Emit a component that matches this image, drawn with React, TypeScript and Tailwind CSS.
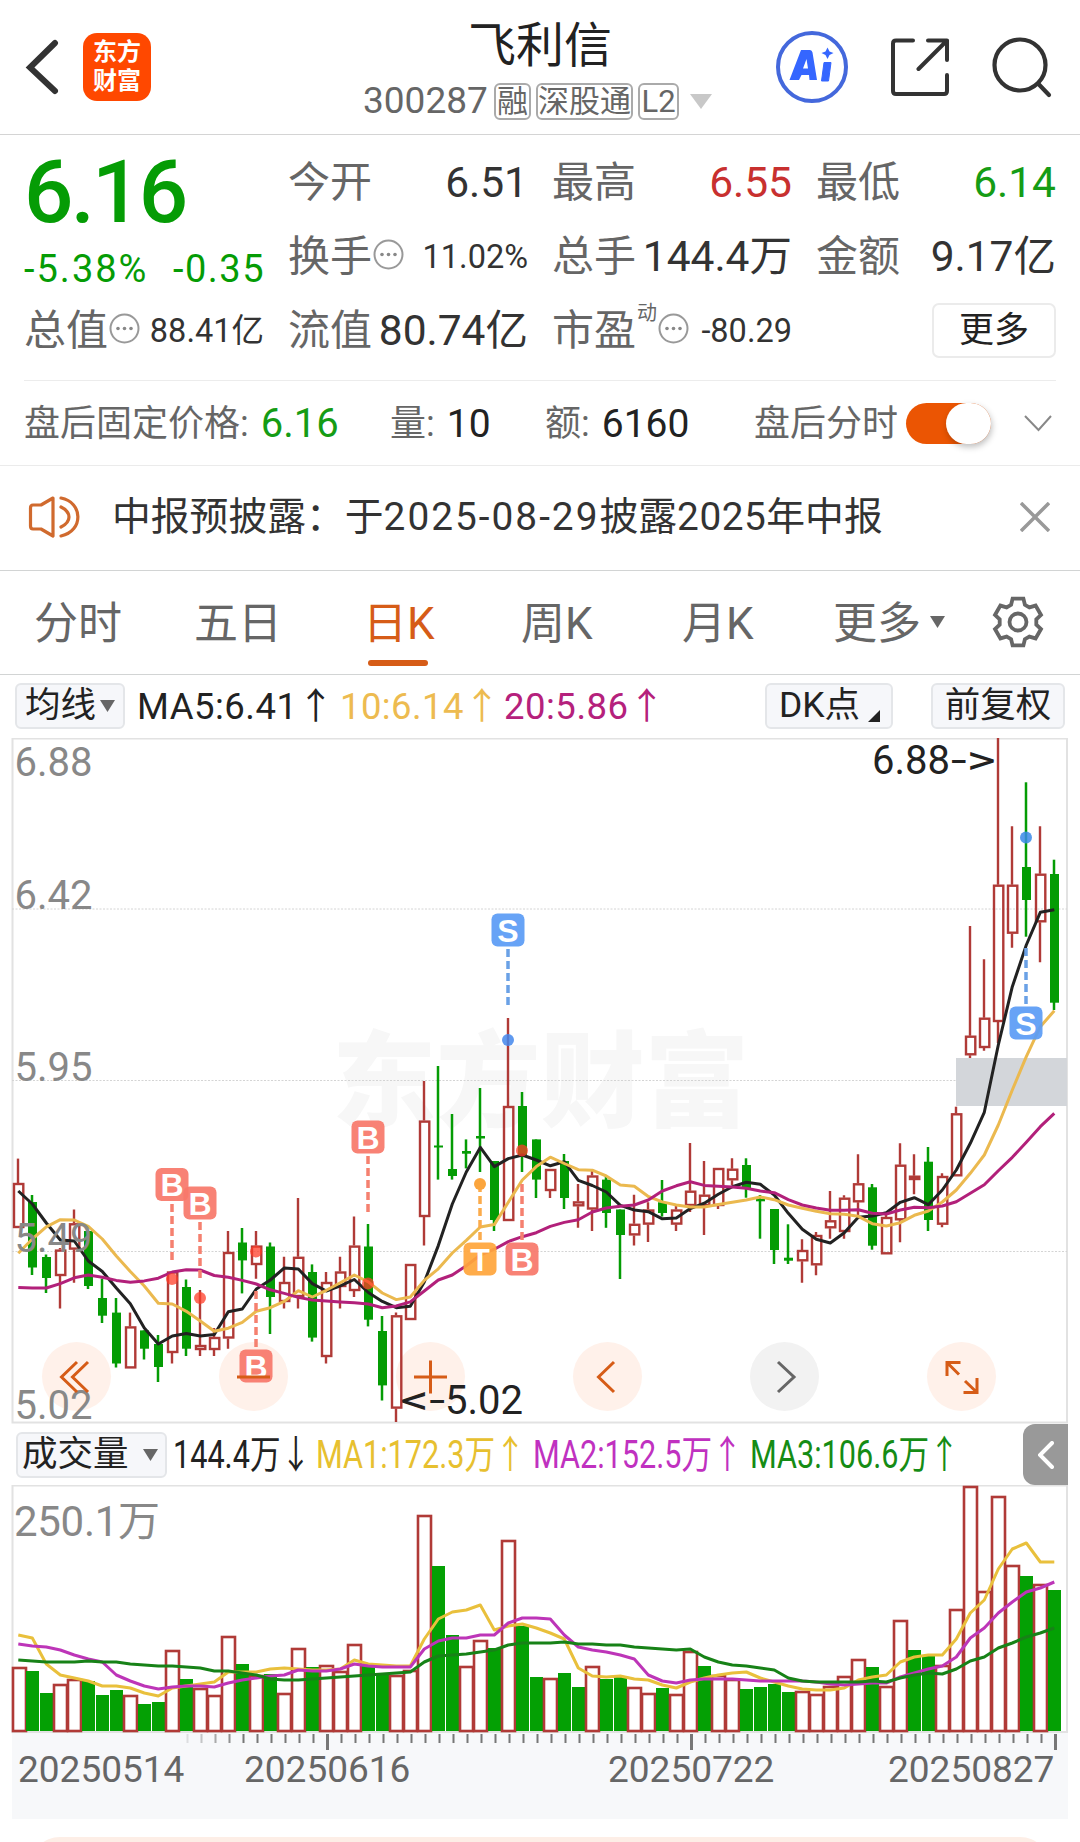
import type { ReactNode } from "react";

type Dir = "up" | "down";
type Candle = [dir: Dir, high: number, top: number, bottom: number, low: number];

const STEP = 14;
const FIRST_X = 18;
const xAt = (i: number) => FIRST_X + i * STEP;

const candles: Candle[] = [
  ["up", 1158.6, 1183, 1228, 1228],
  ["down", 1195, 1202, 1267.5, 1275],
  ["down", 1254.5, 1257, 1278, 1293],
  ["up", 1248, 1249.6, 1276, 1308.6],
  ["up", 1209.5, 1223.3, 1249.6, 1282.7],
  ["down", 1231, 1231, 1286, 1289],
  ["down", 1278.7, 1298, 1315.7, 1323],
  ["down", 1298, 1312.6, 1363.5, 1367.5],
  ["up", 1312.6, 1326.4, 1368.4, 1368.4],
  ["down", 1330.4, 1330.4, 1348.7, 1359.5],
  ["down", 1335, 1344, 1367, 1382],
  ["up", 1271.5, 1271.5, 1353, 1363.5],
  ["down", 1279.5, 1287, 1348.7, 1356],
  ["up", 1290, 1345, 1350, 1356],
  ["up", 1328, 1337, 1350, 1356],
  ["up", 1231, 1252, 1338.5, 1348.7],
  ["down", 1228, 1242.5, 1260.4, 1293.4],
  ["up", 1231, 1245.6, 1265, 1278.7],
  ["down", 1242.5, 1246.5, 1297, 1334],
  ["up", 1256.8, 1282, 1302, 1308.6],
  ["up", 1198, 1256.8, 1297, 1308.6],
  ["down", 1264.4, 1272, 1337.6, 1341.6],
  ["up", 1272, 1282, 1357, 1363.5],
  ["up", 1256.8, 1271.5, 1287, 1308.6],
  ["up", 1216.6, 1245.6, 1291, 1297],
  ["down", 1224, 1246.5, 1319.7, 1326.4],
  ["down", 1316, 1331, 1385.4, 1400.5],
  ["up", 1312.6, 1315.3, 1408.6, 1422],
  ["up", 1264, 1264, 1320, 1320],
  ["up", 1081, 1120.6, 1217, 1245.6],
  ["down", 1066, 1145.5, 1147.5, 1179.6],
  ["down", 1114, 1169, 1176, 1179.6],
  ["down", 1139.4, 1151, 1153.7, 1168.4],
  ["down", 1088, 1136, 1138.5, 1172],
  ["down", 1161, 1161, 1220, 1231],
  ["up", 1018, 1106, 1221, 1221],
  ["down", 1092, 1106, 1156, 1172],
  ["down", 1139.4, 1139.4, 1179.6, 1198],
  ["up", 1169, 1169, 1191, 1198],
  ["down", 1154, 1161, 1198, 1209],
  ["up", 1184, 1201.4, 1206.3, 1227.8],
  ["up", 1169, 1175.5, 1209.5, 1231],
  ["down", 1176, 1179.6, 1213, 1227.8],
  ["down", 1209.5, 1209.5, 1235, 1279],
  ["up", 1194.7, 1223.8, 1235.4, 1245.6],
  ["up", 1202.3, 1209.5, 1224.6, 1242],
  ["down", 1180, 1202.3, 1213, 1216.6],
  ["up", 1206, 1209.5, 1224.6, 1231],
  ["up", 1143, 1190.7, 1206, 1212],
  ["up", 1161, 1194.7, 1206, 1235],
  ["up", 1168, 1168, 1206, 1209],
  ["up", 1158.3, 1168.7, 1180.3, 1185],
  ["down", 1158.3, 1165, 1188.3, 1197.7],
  ["down", 1195, 1199, 1201.3, 1238.7],
  ["down", 1209, 1209, 1250, 1264],
  ["down", 1224.3, 1257.7, 1260.7, 1264],
  ["up", 1239.3, 1250, 1261.3, 1282.7],
  ["up", 1232, 1235, 1265.3, 1275.3],
  ["up", 1191, 1220.3, 1228.3, 1238.7],
  ["up", 1195.3, 1197.7, 1232, 1238.7],
  ["up", 1154.3, 1183.3, 1202.3, 1216],
  ["down", 1184, 1187.3, 1245.7, 1249.7],
  ["up", 1213, 1217, 1254.3, 1254.3],
  ["up", 1143.3, 1164.7, 1220.3, 1242.3],
  ["up", 1154.3, 1175.7, 1180, 1194.3],
  ["down", 1147, 1161.7, 1220, 1231],
  ["up", 1173.3, 1176, 1224.7, 1227.3],
  ["up", 1106.7, 1113.3, 1176.3, 1176.3],
  ["up", 926, 1035.7, 1055.3, 1058],
  ["up", 959.3, 1017.7, 1048, 1050.7],
  ["up", 738, 884.7, 1022, 1043],
  ["up", 826.3, 884.7, 933.7, 947.7],
  ["down", 782.3, 867, 900, 936.7],
  ["up", 826.3, 873.7, 922.3, 962.3],
  ["down", 859.7, 874, 1002.7, 1010],
];

const ma5 = [
  1191, 1204, 1223, 1240, 1241, 1261, 1271.5, 1288, 1303.7, 1328, 1344, 1336, 1333.6, 1336, 1334.5,
  1311.7, 1309, 1289, 1280, 1268, 1269, 1283.6, 1291, 1285.8, 1279.5, 1292.5, 1301.4, 1307.7, 1306.3,
  1282, 1245.6, 1204, 1172, 1147.4, 1166.6, 1158.6, 1155, 1160, 1165.8, 1161.7, 1180.4, 1185.5, 1192,
  1205.4, 1210, 1211.7, 1218.8, 1218, 1208.6, 1203.2, 1194.3, 1186.7, 1182.3, 1184.3, 1195, 1213.3,
  1229.3, 1239.3, 1243, 1232.7, 1217.3, 1216, 1212.7, 1202.3, 1197.7, 1204.7, 1190, 1170, 1143.3,
  1112.3, 1045, 986.7, 945, 912.3, 909.7,
];

const ma10 = [
  1253.2, 1239, 1226.9, 1219.7, 1220, 1226.4, 1239, 1256, 1271.5, 1286, 1303.2, 1304, 1311.3, 1321,
  1331.3, 1328.2, 1322.4, 1311.3, 1307.7, 1301.4, 1290.7, 1297, 1290.3, 1282.7, 1275, 1281.8, 1293,
  1299.6, 1297, 1280.4, 1268.8, 1253, 1240.3, 1227, 1224.6, 1202.3, 1180, 1166.6, 1157.2, 1163.5,
  1169.7, 1170.2, 1176, 1185, 1186.3, 1196.5, 1201.9, 1205, 1207, 1207, 1204.6, 1202.3, 1200, 1197,
  1199.7, 1205, 1208.3, 1211.3, 1213.7, 1214.3, 1216.3, 1223.7, 1226, 1222.7, 1215.3, 1211, 1202,
  1190, 1173.3, 1155, 1125, 1090, 1056.7, 1026.7, 1010.7,
];

const ma20 = [
  1287.6, 1288, 1288, 1283.6, 1277.8, 1275, 1277.3, 1280.4, 1282.2, 1280.9, 1278.2, 1272, 1269.7,
  1270, 1275.5, 1277.3, 1280.4, 1284, 1289.8, 1293.4, 1297.4, 1300, 1301, 1301.9, 1302.8, 1304,
  1307.7, 1305.9, 1301.9, 1291, 1280, 1275, 1265.7, 1255, 1249.2, 1241.6, 1236.7, 1232.7, 1226.4,
  1222.4, 1219.7, 1212, 1208, 1206.3, 1205, 1200, 1191, 1185.8, 1181.8, 1185.4, 1186.3, 1187, 1188.3,
  1191, 1192.7, 1199.7, 1205, 1208, 1210.3, 1210.3, 1209.7, 1213.3, 1214, 1210, 1207.3, 1207.7,
  1206, 1201.7, 1193.3, 1184.7, 1170.7, 1157.3, 1142.3, 1126.7, 1113.3,
];

// Volume bars, heights in chart pixels
const volumes: [Dir, number][] = [
  ["up", 65], ["down", 61], ["down", 39], ["up", 48], ["up", 53], ["down", 51], ["down", 37],
  ["down", 42], ["up", 37], ["down", 28], ["down", 30], ["up", 82], ["down", 53], ["up", 44],
  ["up", 37], ["up", 96], ["down", 68], ["up", 57], ["down", 58], ["up", 39], ["up", 84],
  ["down", 65], ["up", 67], ["up", 61], ["up", 88], ["down", 66], ["down", 59], ["up", 57],
  ["up", 62], ["up", 217], ["down", 166], ["down", 97], ["up", 66], ["up", 92], ["down", 84],
  ["up", 192], ["down", 106], ["down", 55], ["up", 54], ["down", 59], ["down", 45], ["up", 66],
  ["down", 53], ["down", 55], ["up", 45], ["up", 39], ["down", 44], ["up", 38], ["up", 81],
  ["down", 66], ["up", 57], ["up", 53], ["down", 43], ["down", 45], ["down", 48], ["down", 40],
  ["up", 41], ["up", 38], ["up", 46], ["up", 56], ["up", 73], ["down", 65], ["up", 46],
  ["up", 112], ["down", 82], ["down", 76], ["up", 67], ["up", 123], ["up", 246], ["up", 141],
  ["up", 236], ["up", 167], ["down", 156], ["up", 148], ["down", 142],
];

const vol5 = [
  97, 94, 68, 57, 54, 51, 46, 46, 44, 39, 36, 44, 46, 48, 50, 60, 60, 60, 63, 64, 63, 62, 62, 63, 72,
  68, 67, 66, 66, 93, 113, 120, 122, 127, 102, 106, 108, 104, 99, 93, 64, 56, 55, 56, 53, 52, 47, 44,
  50, 54, 57, 59, 60, 54, 50, 46, 43, 42, 42, 44, 52, 55, 57, 70, 75, 77, 77, 93, 119, 132, 163, 183,
  189, 170, 170,
];

const vol10 = [
  88, 86, 85, 82, 77, 73, 70, 57, 51, 46, 43, 45, 46, 46, 45, 49, 52, 54, 56, 57, 62, 61, 61, 63, 68,
  66, 65, 65, 65, 83, 91, 94, 94, 97, 97, 109, 114, 114, 113, 97, 85, 82, 80, 77, 73, 57, 51, 49, 52,
  53, 53, 53, 52, 51, 51, 51, 51, 50, 48, 47, 48, 49, 49, 55, 59, 63, 66, 75, 94, 104, 119, 130, 140,
  144, 150,
];

const vol20 = [
  72, 71, 70, 70, 70, 71, 70, 70, 68, 67, 66, 66, 65, 64, 61, 61, 59, 57, 53, 52, 52, 53, 54, 55, 56,
  57, 58, 59, 60, 70, 76, 77, 78, 80, 82, 87, 89, 89, 89, 90, 88, 88, 87, 87, 85, 84, 83, 82, 83, 75,
  70, 67, 66, 64, 62, 54, 51, 50, 50, 50, 50, 51, 50, 54, 57, 59, 58, 63, 71, 75, 84, 89, 95, 99, 104,
];

const RED = "#b03a37";
const GREEN = "#049c04";

const toPoints = (ys: number[]) => ys.map((y, i) => `${xAt(i) + 0.3},${y}`).join(" ");

function MoreDots() {
  return (
    <svg className="w-[31px] h-[31px] shrink-0 -mt-1.5 ml-px" viewBox="0 0 31 31">
      <circle cx="15.5" cy="15.5" r="14" fill="none" stroke="#999" strokeWidth="2" />
      <circle cx="9" cy="15.5" r="1.8" fill="#888" />
      <circle cx="15.5" cy="15.5" r="1.8" fill="#888" />
      <circle cx="22" cy="15.5" r="1.8" fill="#888" />
    </svg>
  );
}

function Header() {
  return (
    <header className="relative h-[135px] border-b border-[#d4d4d4] flex justify-between">
      <div className="flex items-center pl-[25px] gap-6">
        <svg className="w-[34px] h-[58px]" viewBox="0 0 34 58" fill="none">
          <path d="M30 5 L5 29.5 L30 53" stroke="#333" strokeWidth="6" strokeLinecap="round" />
        </svg>
        <div className="w-[68px] h-[68px] rounded-[14px] bg-[#ff4800] text-white font-bold text-[24px] leading-[29px] flex flex-col items-center justify-center">
          <span>东方</span>
          <span>财富</span>
        </div>
      </div>

      <div className="absolute left-[363px] top-0 w-[352px] flex flex-col">
        <h1 className="text-[48px] leading-[60px] pt-4 pl-[105px] text-[#222]">飞利信</h1>
        <div className="flex items-center h-[38px] mt-[6px] text-[#666]">
          <span className="text-[37px] w-[131px]">300287</span>
          <div className="flex gap-[5px] text-[31px] leading-[33px]">
            <span className="border-2 border-[#aaa] rounded-[6px] w-[37px] h-[37px] flex items-center justify-center">融</span>
            <span className="border-2 border-[#aaa] rounded-[6px] w-[97px] h-[37px] flex items-center justify-center">深股通</span>
            <span className="border-2 border-[#aaa] rounded-[6px] w-[41px] h-[37px] flex items-center justify-center">L2</span>
          </div>
          <svg className="w-[22px] h-[15px] ml-[11px]" viewBox="0 0 22 15">
            <path d="M0 0 H22 L11 15 Z" fill="#c8c8c8" />
          </svg>
        </div>
      </div>

      <div className="flex items-center gap-[43px] pr-[28px]">
        <svg className="w-[72px] h-[72px]" viewBox="0 0 72 72">
          <circle cx="36" cy="36" r="34" fill="none" stroke="#4468dc" strokeWidth="4" />
          <path d="M25 19 H34 Q36 19 36.5 21.5 L41 49 H33.5 L33 44 H25.5 L23 49 H13.5 Z M30.5 28 L27 37.5 H32 Z" fill="#3566ff" fillRule="evenodd" />
          <path d="M48 31.5 H55 L52.5 50 H45.5 Z" fill="#3566ff" stroke="#3566ff" strokeLinejoin="round" />
          <path d="M51.5 16.5 L53.5 20.5 L57.5 22 L53.5 24 L51.5 28 L49.5 24 L45.5 22 L49.5 20.5 Z" fill="#3566ff" />
        </svg>
        <svg className="w-[58px] h-[58px]" viewBox="0 0 58 58" fill="none" stroke="#333" strokeWidth="4" strokeLinecap="round" strokeLinejoin="round">
          <path d="M22 2.5 H5 Q2 2.5 2 5.5 V53 Q2 56 5 56 H53 Q56 56 56 53 V37" />
          <path d="M37 2.5 H56 V22 M56 2.5 L27.5 31" />
        </svg>
        <svg className="w-[61px] h-[61px] -ml-px" viewBox="0 0 61 61" fill="none" stroke="#333" strokeWidth="4.2" strokeLinecap="round">
          <circle cx="29" cy="28" r="25.5" />
          <path d="M47.5 47 L58 58" />
        </svg>
      </div>
    </header>
  );
}

function Quote({ label, value, color = "text-[#333]" }: { label: string; value: string; color?: string }) {
  return (
    <div className="flex items-center justify-between">
      <span className="text-[#666]">{label}</span>
      <span className={`text-[42.5px] ${color}`}>{value}</span>
    </div>
  );
}

function SmallQuote({ label, value, sup }: { label: string; value: string; sup?: string }) {
  return (
    <div className="flex items-center">
      <span className="text-[#666]">{label}</span>
      {sup && <span className="text-[20px] text-[#666] self-start w-[21px] pl-px -mt-[18px]">{sup}</span>}
      <MoreDots />
      <span className="text-[#333] text-[32.5px] ml-auto">{value}</span>
    </div>
  );
}

function QuotePanel() {
  return (
    <section className="h-[246px] mx-6 border-b border-[#ececec] pt-[11px]">
      <div className="grid grid-cols-4 gap-x-6 auto-rows-[74px] text-[42px] leading-[74px] whitespace-nowrap">
        <div className="row-span-2 flex flex-col text-[#059c05]">
          <span className="text-[87px] leading-[93px] font-medium tracking-[-2.8px] h-[95px]">6.16</span>
          <span className="flex justify-between text-[38px] leading-[61px]">
            <span className="tracking-[2px]">-5.38%</span>
            <span className="tracking-[1.5px] -mr-[1px]">-0.35</span>
          </span>
        </div>
        <Quote label="今开" value="6.51" />
        <Quote label="最高" value="6.55" color="text-[#c8302f]" />
        <Quote label="最低" value="6.14" color="text-[#159c15]" />
        <SmallQuote label="换手" value="11.02%" />
        <Quote label="总手" value="144.4万" />
        <Quote label="金额" value="9.17亿" />
        <SmallQuote label="总值" value="88.41亿" />
        <Quote label="流值" value="80.74亿" />
        <SmallQuote label="市盈" value="-80.29" sup="动" />
        <div className="flex items-center justify-end">
          <button className="w-[124px] h-[55px] -mt-0.5 border-2 border-[#ebebeb] rounded-[7px] text-[35px] leading-none text-[#222]">更多</button>
        </div>
      </div>
    </section>
  );
}

function AfterHours() {
  return (
    <section className="h-[85px] border-b border-[#ebebeb] flex items-center pt-0.5 pl-6 text-[36px] text-[#666] whitespace-nowrap">
      <div className="w-[366px] flex items-center">
        盘后固定价格:<span className="text-[40px] text-[#159c15] ml-3">6.16</span>
      </div>
      <div className="w-[155px] flex items-center">
        量:<span className="text-[39px] text-[#222] ml-3">10</span>
      </div>
      <div className="w-[209px] flex items-center">
        额:<span className="text-[39px] text-[#222] ml-3">6160</span>
      </div>
      <span>盘后分时</span>
      <span className="ml-2 -mt-0.5 w-[85px] h-[41px] rounded-full bg-[#eb5503] flex items-center justify-end">
        <span className="w-[45px] h-[41px] rounded-full bg-white shadow-[1px_3px_6px_rgba(0,0,0,0.25)]" />
      </span>
      <svg className="w-7 h-[17px] ml-[33px] -mt-0.5" viewBox="0 0 28 17" fill="none">
        <path d="M1 1 L14.5 15 L27 1" stroke="#888" strokeWidth="2" />
      </svg>
    </section>
  );
}

function Notice() {
  return (
    <section className="h-[105px] border-b border-[#d2d4d4] flex items-center pl-7 pb-0.5">
      <svg className="w-[54px] h-[44px]" viewBox="0 0 54 44" fill="none" stroke="#d06a2e" strokeWidth="3.2" strokeLinecap="round" strokeLinejoin="round">
        <path d="M25 3 L13 10 H5 Q2.5 10 2.5 13 V31 Q2.5 34 5 34 H13 L25 41 Z" />
        <path d="M33 12 Q41 16 41 22 Q41 28 33 32" />
        <path d="M33 3 C55 7 56 36 33 41" />
      </svg>
      <p className="ml-[30px] text-[38.8px] text-[#333] whitespace-nowrap">
        中报预披露：于<span className="tracking-[2px]">2025-08-29</span>披露<span className="tracking-[0.5px]">2025</span>年中报
      </p>
      <svg className="w-[30px] h-[30px] ml-auto mr-[30px]" viewBox="0 0 30 30" stroke="#999" strokeWidth="3.5">
        <path d="M1 1 L29 29 M29 1 L1 29" />
      </svg>
    </section>
  );
}

// six-toothed cog outline
const gearPoints = Array.from({ length: 6 }, (_, k) =>
  [
    [-22, 18.5],
    [-13, 24],
    [13, 24],
    [22, 18.5],
  ].map(([deg, r]) => {
    const a = ((k * 60 + deg - 90) * Math.PI) / 180;
    return `${(26 + r * Math.cos(a)).toFixed(1)},${(26 + r * Math.sin(a)).toFixed(1)}`;
  })
)
  .flat()
  .join(" ");

function PeriodTabs() {
  return (
    <nav className="h-[104px] border-b border-[#d2d4d4] flex items-center pt-[3px] text-[44px] text-[#666] whitespace-nowrap pl-[34px]">
      <span className="w-[160px]">分时</span>
      <span className="w-[169px]">五日</span>
      <span className="relative w-[158px] text-[#d65c17]">
        日K
        <span className="absolute left-[5px] -bottom-[9px] w-[60px] h-1.5 rounded-full bg-[#d65c17]" />
      </span>
      <span className="w-[161px]">周K</span>
      <span className="w-[151px]">月K</span>
      <span>更多</span>
      <svg className="w-[15px] h-3 ml-[9px] -mt-1" viewBox="0 0 15 12">
        <path d="M0 0 H15 L7.5 12 Z" fill="#666" />
      </svg>
      <svg className="w-[52px] h-[52px] ml-[47px] -mt-1" viewBox="0 0 52 52" fill="none" stroke="#666" strokeWidth="3.8">
        <polygon points={gearPoints} />
        <circle cx="26" cy="26" r="8.5" />
      </svg>
    </nav>
  );
}

function Pill({ className, children }: { className: string; children: ReactNode }) {
  return (
    <button className={`h-[46px] rounded-[6px] border-2 border-[#e4e6e9] bg-[#f6f7fa] text-[35.5px] leading-none text-[#222] flex items-center ${className}`}>
      {children}
    </button>
  );
}

function MaLegend() {
  return (
    <div className="h-[63px] pt-2 pl-[15px] pr-[15px] flex text-[36.5px] leading-[48px] whitespace-nowrap">
      <Pill className="w-[110px] pl-[8px]">
        均线
        <svg className="w-[15px] h-3 ml-1" viewBox="0 0 15 12">
          <path d="M0 0 H15 L7.5 12 Z" fill="#666" />
        </svg>
      </Pill>
      <span className="ml-3 w-[203px] text-[#222] tracking-[0.5px]">MA5:6.41↑</span>
      <span className="w-[164px] text-[#edbb50] tracking-[0.4px]">10:6.14↑</span>
      <span className="text-[#b5217c] tracking-[0.5px]">20:5.86↑</span>
      <Pill className="w-[128px] pl-3 ml-auto">
        DK点
        <svg className="w-3 h-3 ml-2 mt-5" viewBox="0 0 12 12">
          <path d="M12 0 V12 H0 Z" fill="#222" />
        </svg>
      </Pill>
      <Pill className="w-[134px] ml-[38px] justify-center">前复权</Pill>
    </div>
  );
}

function Marker({ x, y, letter, color }: { x: number; y: number; letter: string; color: string }) {
  return (
    <g>
      <rect x={x - 16.5} y={y} width="33" height="33" rx="6" fill={color} fillOpacity="0.93" />
      <text x={x} y={y + 28} fontSize="32" fontWeight="700" textAnchor="middle" fill="#fff" fontFamily="Liberation Sans, sans-serif">
        {letter}
      </text>
    </g>
  );
}

function Dash({ x, y1, y2, color }: { x: number; y1: number; y2: number; color: string }) {
  return <line x1={x} x2={x} y1={y1} y2={y2} stroke={color} strokeWidth="3.5" strokeDasharray="8 4" />;
}

const controlIcons = [
  "M24 9 L8.5 24 L24 39 M35 9 L19.5 24 L35 39",
  "M7 24 H40",
  "M7 24 H40 M23.5 7.5 V40.5",
  "M30 9 L14.5 24 L30 39",
  "M17 9 L33 24 L17 39",
  "M9 23 V9.5 H22.5 M9 9.5 L21 21.5 M39 25 V39.5 H25.5 M39 39.5 L27 28",
];

function PriceChart() {
  return (
    <div className="relative h-[692px]">
      <div className="absolute left-[42px] right-[84px] top-[604px] flex justify-between">
        {controlIcons.map((d, i) => (
          <button
            key={i}
            className={`w-[69px] h-[69px] rounded-full flex items-center justify-center ${i === 4 ? "bg-[#f2f2f2]" : "bg-[#fff1ea]"}`}
          >
            <svg className="relative z-20 w-12 h-12" viewBox="0 0 48 48" fill="none" stroke={i === 4 ? "#666" : "#d65c17"} strokeWidth="3">
              <path d={d} />
            </svg>
          </button>
        ))}
      </div>

      <svg className="relative z-10 w-[1080px] h-[692px] pointer-events-none" viewBox="0 738 1080 692">
        <text x="332" y="1119" fontSize="104" fontWeight="900" fill="#f7f7f7" textLength="417" lengthAdjust="spacingAndGlyphs">
          东方财富
        </text>
        <rect x="12.5" y="738.5" width="1054.5" height="684" fill="none" stroke="#e2e2e2" strokeWidth="2" />
        {[909, 1080.5, 1251.5].map((y) => (
          <line key={y} x1="12" x2="1067" y1={y} y2={y} stroke="#d4d4d4" strokeDasharray="2 1.5" />
        ))}
        <rect x="956" y="1058" width="111" height="48" fill="#d3d6da" />

        {candles.map(([dir, high, top, bottom, low], i) => {
          const x = xAt(i);
          if (dir === "down") {
            return (
              <g key={i} fill={GREEN}>
                <rect x={x - 1.25} y={high} width="2.5" height={low - high} />
                <rect x={x - 4} y={top} width="9" height={Math.max(bottom - top, 2)} />
              </g>
            );
          }
          return (
            <g key={i} fill="none" stroke={RED} strokeWidth="2.4">
              <path d={`M${x} ${high} V${top} M${x} ${bottom} V${low}`} />
              <rect x={x - 4} y={top + 1} width="9.3" height={Math.max(bottom - top - 2, 1)} />
            </g>
          );
        })}

        <g fill="none" strokeWidth="3" strokeLinejoin="round">
          <polyline points={toPoints(ma5)} stroke="#222" />
          <polyline points={toPoints(ma10)} stroke="#ebb94f" />
          <polyline points={toPoints(ma20)} stroke="#b2207a" />
        </g>

        <Dash x={172} y1={1204} y2={1260} color="#f5806f" />
        <Dash x={200} y1={1222} y2={1278} color="#f5806f" />
        <Dash x={256} y1={1291} y2={1347} color="#f5806f" />
        <Dash x={368} y1={1156} y2={1212} color="#f5806f" />
        <Dash x={508} y1={949} y2={1005} color="#6aa1e6" />
        <Dash x={480} y1={1184} y2={1240} color="#fbab4b" />
        <Dash x={522} y1={1184} y2={1240} color="#f5806f" />
        <Dash x={1026} y1={948} y2={1004} color="#6aa1e6" />
        <g fill="#ff3d28" fillOpacity="0.75">
          <circle cx="172" cy="1279" r="6" />
          <circle cx="200" cy="1298" r="6" />
          <circle cx="256" cy="1251.5" r="6" />
          <circle cx="368" cy="1283.5" r="6" />
          <circle cx="522" cy="1150.5" r="6" />
        </g>
        <circle cx="480" cy="1184" r="6" fill="#fba53d" />
        <circle cx="508" cy="1040" r="6" fill="#4387ec" fillOpacity="0.85" />
        <circle cx="1026" cy="837.5" r="6" fill="#3a8ae8" fillOpacity="0.85" />
        <Marker x={172} y={1168} letter="B" color="#f8796a" />
        <Marker x={200} y={1186.5} letter="B" color="#f8796a" />
        <Marker x={256} y={1349.5} letter="B" color="#f8796a" />
        <Marker x={368} y={1120.5} letter="B" color="#f8796a" />
        <Marker x={508} y={913.5} letter="S" color="#5b9cf5" />
        <Marker x={480} y={1242.5} letter="T" color="#ffa63c" />
        <Marker x={522} y={1242.5} letter="B" color="#f8796a" />
        <Marker x={1026} y={1006.5} letter="S" color="#5b9cf5" />

        <g fontSize="40" fill="#888">
          <text x="14.5" y="775.5">6.88</text>
          <text x="14.5" y="908.5">6.42</text>
          <text x="14.5" y="1081">5.95</text>
          <text x="14.5" y="1252">5.49</text>
          <text x="14.5" y="1418.5">5.02</text>
        </g>
        <g fontSize="40" fill="#222">
          <text x="872" y="774">6.88</text>
          <text x="951" y="774" textLength="45" lengthAdjust="spacingAndGlyphs">{"->"}</text>
          <text x="400" y="1414" textLength="45" lengthAdjust="spacingAndGlyphs">{"<-"}</text>
          <text x="445" y="1414">5.02</text>
        </g>
      </svg>
    </div>
  );
}

function VolumeLegend() {
  const items = [
    { text: "144.4万↓", className: "w-[143px] text-[#222]" },
    { text: "MA1:172.3万↑", className: "w-[217px] text-[#e7c02f]" },
    { text: "MA2:152.5万↑", className: "w-[217px] text-[#c031c0]" },
    { text: "MA3:106.6万↑", className: "w-[217px] text-[#158c15]" },
  ];
  return (
    <div className="h-[55px] pl-4 pr-3 flex whitespace-nowrap">
      <Pill className="w-[151px] pl-1 mt-0.5 mr-[6px]">
        成交量
        <svg className="w-[15px] h-3 ml-3.5" viewBox="0 0 15 12">
          <path d="M0 0 H15 L7.5 12 Z" fill="#666" />
        </svg>
      </Pill>
      {items.map((item) => (
        <span key={item.text} className={item.className}>
          <span className="inline-block origin-left scale-x-[0.795] text-[38.5px] leading-[49px]">{item.text}</span>
        </span>
      ))}
      <button className="-mt-[6px] ml-auto w-[45px] h-[61px] rounded-l-[12px] bg-[#999] flex items-center justify-center">
        <svg className="w-4 h-7" viewBox="0 0 16 28" fill="none">
          <path d="M14 2 L2 14 L14 26" stroke="#fff" strokeWidth="4" strokeLinecap="round" />
        </svg>
      </button>
    </div>
  );
}

function VolumeChart() {
  const base = 247;
  const line = (hs: number[]) => toPoints(hs.map((h) => base - h));
  return (
    <svg className="block w-[1080px] h-[248px]" viewBox="0 0 1080 248">
      <rect x="12.5" y="0.5" width="1054.5" height="246.5" fill="none" stroke="#e2e2e2" strokeWidth="2" />
      <text x="14" y="50.5" fontSize="42" fill="#888" textLength="146">250.1万</text>
      {volumes.map(([dir, h], i) =>
        dir === "down" ? (
          <rect key={i} x={xAt(i) - 6} y={base - h} width="13" height={h - 1} fill="#04a004" />
        ) : (
          <rect key={i} x={Math.max(xAt(i) - 6, 13)} y={base - h + 1} width="13" height={h - 2} fill="#fff" stroke={RED} strokeWidth="2.6" />
        )
      )}
      <g fill="none" strokeWidth="3" strokeLinejoin="round">
        <polyline points={line(vol5)} stroke="#e9c03c" />
        <polyline points={line(vol10)} stroke="#bd35b8" />
        <polyline points={line(vol20)} stroke="#178217" />
      </g>
    </svg>
  );
}

function DateAxis() {
  const ticks = Array.from({ length: 63 }, (_, k) => k + 12);
  return (
    <div className="ml-3 w-[1056px] h-[86px] bg-[#f7f8fa]">
      <svg className="block w-full h-[18px]" viewBox="12 0 1056 18">
        {ticks.map((i) => {
          const major = i === 22 || i === 48 || i === 74;
          return (
            <rect
              key={i}
              x={xAt(i) + (major ? 0 : 0.5)}
              y="1"
              width={major ? 3 : 2}
              height={major ? 16 : 9}
              fill="#777"
              fillOpacity={Math.min(1, (i - 11) / 5)}
            />
          );
        })}
      </svg>
      <div className="flex text-[37px] leading-[38px] text-[#666] pl-[6px]">
        <span className="w-[226px]">20250514</span>
        <span className="w-[364px]">20250616</span>
        <span className="w-[280px]">20250722</span>
        <span>20250827</span>
      </div>
    </div>
  );
}

export default function App() {
  return (
    <div className="w-[1080px] h-[1842px] overflow-hidden bg-white font-[Roboto,'Noto_Sans_CJK_SC',sans-serif]">
      <Header />
      <QuotePanel />
      <AfterHours />
      <Notice />
      <PeriodTabs />
      <MaLegend />
      <PriceChart />
      <VolumeLegend />
      <VolumeChart />
      <DateAxis />
      <div className="mt-[18px] mx-[30px] h-[60px] rounded-[30px] bg-[#fdeee6]" />
    </div>
  );
}
